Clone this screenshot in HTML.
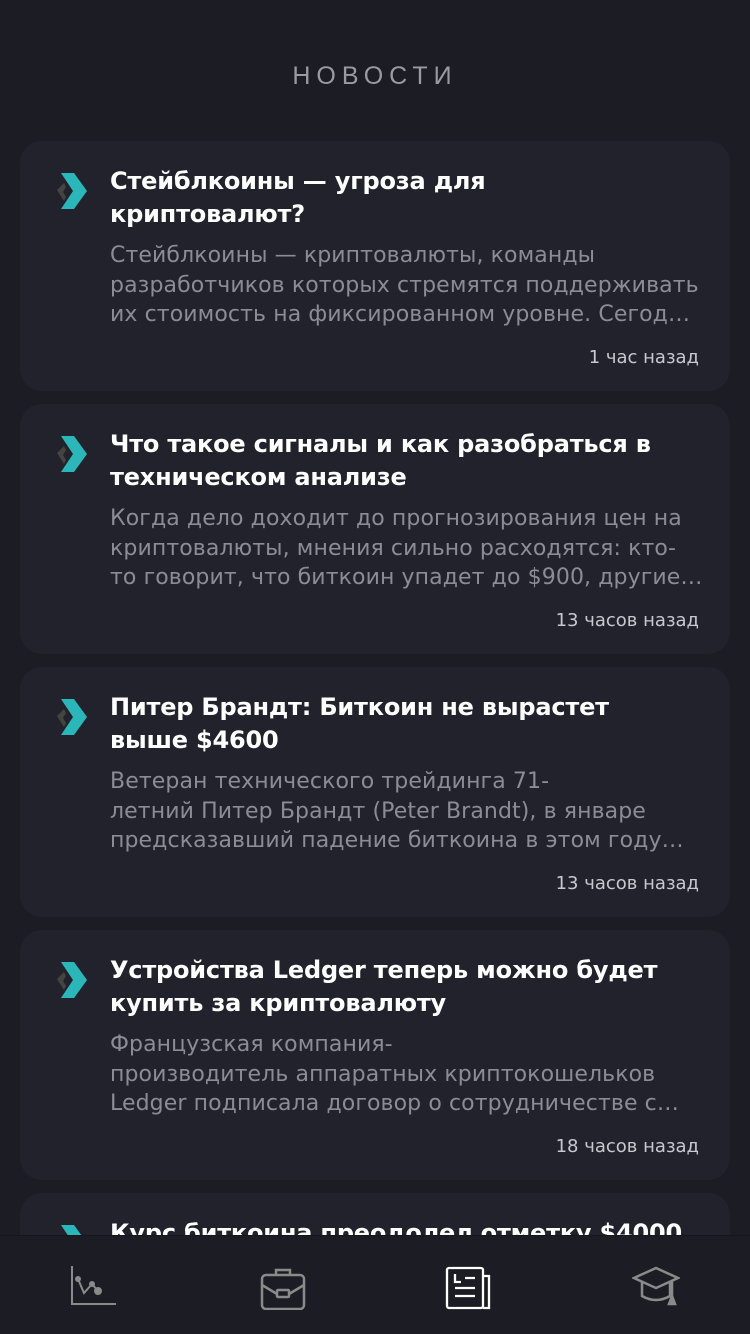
<!DOCTYPE html><html><head><meta charset="utf-8"><style>
html,body{margin:0;width:750px;height:1334px;overflow:hidden}
body{background:#1c1c24;font-family:"DejaVu Sans","Liberation Sans",sans-serif;position:relative}
h1{position:absolute;top:62px;left:0;width:750px;text-align:center;margin:0;font-size:25px;font-weight:normal;letter-spacing:6px;color:#9a9aa4;font-family:"Liberation Sans",sans-serif}
.card{position:absolute;left:20px;width:710px;height:250px;background:#22222d;border-radius:22px;overflow:hidden}
.ic{position:absolute;left:32px;top:32px}
.box{position:absolute;left:90px;top:24px;width:600px;white-space:nowrap}
.t{color:#fff;font-size:24px;line-height:33px;font-weight:bold;letter-spacing:-0.2px}
.d{margin-top:10px;color:#8c8c96;font-size:22px;line-height:29.5px;letter-spacing:0.1px}
.tm{position:absolute;right:31px;top:206px;color:#c8c8d0;font-size:18px}
.tab{position:absolute;left:0;top:1235px;width:750px;height:99px;background:#1c1c24;border-top:1px solid #15151b}
</style></head><body>
<h1>НОВОСТИ</h1>
<svg width="0" height="0" style="position:absolute"><defs><g id="lg"><path d="M5 17 L12 10 L14 14 L11 19 L14 24 L12 28 Z" fill="#45443f"/><path d="M9 0 L22 0 L35 18 L22 36 L9 36 L21 18 Z" fill="#2bb7b9"/></g></defs></svg>
<div class="card" style="top:141px"><svg class="ic" width="36" height="36"><use href="#lg"/></svg><div class="box"><div class="t">Стейблкоины — угроза для<br>криптовалют?</div><div class="d">Стейблкоины — криптовалюты, команды<br>разработчиков которых стремятся поддерживать<br>их стоимость на фиксированном уровне. Сегод…</div></div><div class="tm">1 час назад</div></div>
<div class="card" style="top:404px"><svg class="ic" width="36" height="36"><use href="#lg"/></svg><div class="box"><div class="t">Что такое сигналы и как разобраться в<br>техническом анализе</div><div class="d">Когда дело доходит до прогнозирования цен на<br>криптовалюты, мнения сильно расходятся: кто-<br>то говорит, что биткоин упадет до $900, другие…</div></div><div class="tm">13 часов назад</div></div>
<div class="card" style="top:667px"><svg class="ic" width="36" height="36"><use href="#lg"/></svg><div class="box"><div class="t">Питер Брандт: Биткоин не вырастет<br>выше $4600</div><div class="d">Ветеран технического трейдинга 71-<br>летний Питер Брандт (Peter Brandt), в январе<br>предсказавший падение биткоина в этом году…</div></div><div class="tm">13 часов назад</div></div>
<div class="card" style="top:930px"><svg class="ic" width="36" height="36"><use href="#lg"/></svg><div class="box"><div class="t">Устройства Ledger теперь можно будет<br>купить за криптовалюту</div><div class="d">Французская компания-<br>производитель аппаратных криптокошельков<br>Ledger подписала договор о сотрудничестве с…</div></div><div class="tm">18 часов назад</div></div>
<div class="card" style="top:1193px;height:141px"><svg class="ic" width="36" height="36"><use href="#lg"/></svg><div class="box"><div class="t">Курс биткоина преодолел отметку $4000</div></div></div>
<div class="tab">
<svg style="position:absolute;left:70px;top:28px" width="48" height="44" fill="none" stroke="#8a8a8a" stroke-width="2"><path d="M2 2 V40 H46"/><path d="M8 15 L14 29 L22 20 L28 27"/><circle cx="8" cy="15" r="2" fill="#8a8a8a"/><circle cx="22" cy="20" r="2" fill="#8a8a8a"/><circle cx="28" cy="27" r="3" fill="#8a8a8a"/></svg>
<svg style="position:absolute;left:260px;top:32px" width="46" height="42" fill="none" stroke="#8a8a8a" stroke-width="2.5"><path d="M16 7 V2 H30 V7"/><rect x="2" y="7" width="42" height="34" rx="4"/><path d="M2 17 L17 26 M44 17 L29 26"/><rect x="17" y="22" width="12" height="7" rx="1"/></svg>
<svg style="position:absolute;left:445px;top:30px" width="48" height="44" fill="none" stroke="#fff" stroke-width="2.3"><rect x="2" y="2" width="36" height="40" rx="2"/><path d="M38 10 H44 V42 H38"/><path d="M10 8 V16 H16 M20 12 H30 M10 22 H30 M10 30 H30"/></svg>
<svg style="position:absolute;left:632px;top:30px" width="48" height="44" fill="none" stroke="#8a8a8a" stroke-width="2.5"><path d="M2 12 L24 2 L46 12 L24 22 Z"/><path d="M10 16 V30 Q24 38 38 30 V16"/><path d="M40 14 V30"/><path d="M40 30 L37 38 H43 Z" fill="#8a8a8a"/></svg>
</div>
</body></html>
